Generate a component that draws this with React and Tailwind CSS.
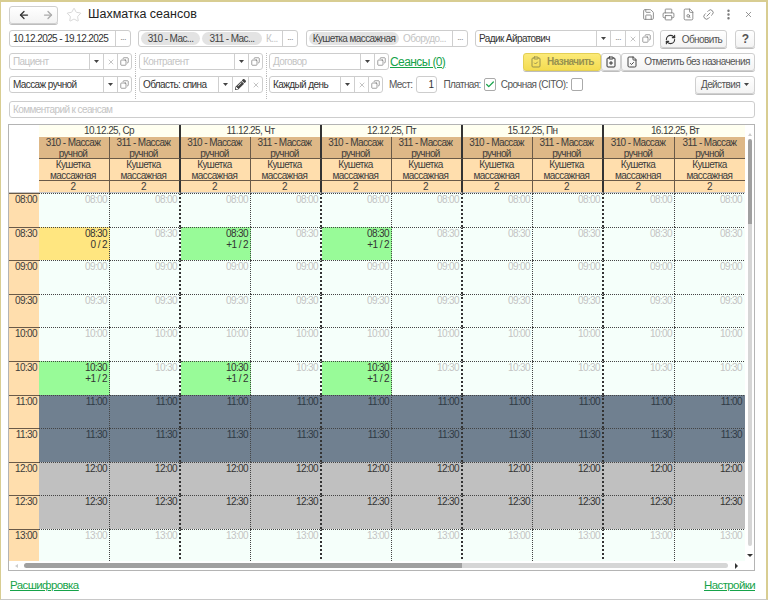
import {
  ArrowLeft, ArrowRight, Star, Save, Printer, FileSearch, Link2, EllipsisVertical, X, RefreshCw,
  ClipboardCheck, ClipboardPlus, FileCheck, Copy, Check,
} from 'lucide-react';
import { FaPencilAlt } from 'react-icons/fa';

const days = ['10.12.25, Ср', '11.12.25, Чт', '12.12.25, Пт', '15.12.25, Пн', '16.12.25, Вт'];
const times = ['08:00', '08:30', '09:00', '09:30', '10:00', '10:30', '11:00', '11:30', '12:00', '12:30', '13:00'];
const rooms = [0, 1, 2, 3, 4, 5, 6, 7, 8, 9];

const booked = {
  '08:30': { 0: ['bg-[#ffe680]', '0 / 2'], 2: ['bg-[#98fb98]', '+1 / 2'], 4: ['bg-[#98fb98]', '+1 / 2'] },
  '10:30': { 0: ['bg-[#98fb98]', '+1 / 2'], 2: ['bg-[#98fb98]', '+1 / 2'], 4: ['bg-[#98fb98]', '+1 / 2'] },
};

const rowTone = (time) => {
  if (time === '11:00' || time === '11:30') return 'bg-[#708090] text-[#2f3a45]';
  if (time === '12:00' || time === '12:30') return 'bg-[#c0c0c0] text-[#333]';
  return 'bg-[#f5fffa] text-[#c4c4c4]';
};

const Arrow = () => (
  <svg width="5" height="3" viewBox="0 0 5 3"><path d="M0 0h5L2.5 3z" fill="#444" /></svg>
);

const Part = ({ children, className = 'w-[14px]' }) => (
  <div className={`flex shrink-0 items-center justify-center border-l border-[#cfcfcf] text-[#888] ${className}`}>{children}</div>
);

const Dots = () => <Part className="w-[15px] pb-[1px] text-[9px]">...</Part>;
const Cross = () => <Part><X size={8} strokeWidth={1.5} /></Part>;
const Open = () => <Part><Copy size={9} strokeWidth={1.5} className="text-[#555] -scale-x-100" /></Part>;
const Drop = () => <Part><Arrow /></Part>;

const Field = ({ width, text, placeholder, children }) => (
  <div className={`flex h-[17px] shrink-0 rounded-[3px] border border-[#cdcdcd] bg-white ${width}`}>
    <div className={`min-w-0 flex-1 truncate pl-[3px] leading-[15px] ${placeholder ? 'text-[#c4c4c4]' : 'text-[#333]'}`}>
      {placeholder || text}
    </div>
    {children}
  </div>
);

const Chip = ({ children, className }) => (
  <span className={`mt-[1px] flex h-[13px] shrink-0 items-center justify-center rounded-full bg-[#e3e3e3] whitespace-nowrap text-[#444] ${className}`}>{children}</span>
);

const Button = ({ children, className = '' }) => (
  <button className={`flex h-[18px] shrink-0 items-center justify-center whitespace-nowrap rounded-[3px] border border-[#cfcfcf] bg-gradient-to-b from-white to-[#f3f3f3] text-[#555] shadow-[0_1px_0_#bdbdbd] ${className}`}>
    {children}
  </button>
);

const Sep = () => <div className="h-[23px] w-0 shrink-0 self-start border-l border-dotted border-[#bbb]" />;

const Box = ({ children }) => (
  <div className="flex h-[13px] w-[12px] shrink-0 items-center justify-center rounded-[2px] border border-[#aaa] bg-white">{children}</div>
);

const cellEdge = (i) => (i % 2 === 0 ? 'border-r border-dotted border-r-[#444] pr-[2px]' : i === 9 ? 'pr-[4px]' : 'border-r-2 border-r-[#333] pr-[2px]');
const headEdge = (i) => (i % 2 === 0 ? 'border-r border-r-[#6a5a48]' : i === 9 ? '' : 'border-r-2 border-r-[#333]');

const Table = () => (
  <div className="mt-[6px] -ml-px flex h-[447px] flex-col border border-[#b4b4b4] bg-white">
    <div className="flex h-[436px]">
      <div className="w-[736px] overflow-hidden">
        <div className="grid grid-cols-[30px_71px_71px_70px_71px_70px_71px_70px_71px_71px_71px] leading-[11px] text-[#3c3c3c]">
          <div className="row-span-4 border-b border-[#c4c4c4] bg-white" />
          {days.map((d, i) => (
            <div key={d} className={`col-span-2 h-[12px] bg-[#fffff0] text-center ${i < 4 ? 'border-r-2 border-r-[#333]' : ''}`}>{d}</div>
          ))}
          {rooms.map((i) => (
            <div key={i} className={`h-[22px] border-b border-[#6a5a48] bg-[#deb887] pr-[2px] text-center ${headEdge(i)}`}>
              {i % 2 === 0 ? '310' : '311'} - Массаж<br />ручной
            </div>
          ))}
          {rooms.map((i) => (
            <div key={i} className={`h-[22px] border-b border-[#6a5a48] bg-[#ffdead] pr-[2px] text-center ${headEdge(i)}`}>Кушетка<br />массажная</div>
          ))}
          {rooms.map((i) => (
            <div key={i} className={`h-[12px] border-b border-[#c4c4c4] bg-[#ffdead] pr-[2px] text-center ${headEdge(i)}`}>2</div>
          ))}
          {times.map((t) => [
            <div key={t} className="h-[33.6px] border-t border-[#6a5a48] bg-[#ffdead] pr-[2px] text-right">{t}</div>,
            ...rooms.map((i) => {
              const mark = booked[t]?.[i];
              return (
                <div
                  key={t + i}
                  className={`h-[33.6px] border-t border-dotted border-t-[#444] text-right ${cellEdge(i)} ${mark ? `${mark[0]} text-[#333]` : rowTone(t)}`}
                >
                  {t}
                  {mark && <div>{mark[1]}</div>}
                </div>
              );
            }),
          ])}
        </div>
      </div>
      <div className="flex w-[9px] flex-col items-center pt-[8px] pb-[4px]">
        <div className="h-0 w-0 border-x-[2px] border-b-[3px] border-x-transparent border-b-[#ccc]" />
        <div className="mt-[3px] h-[85px] w-[4px] rounded-t-[2px] bg-[#a0a0a0]" />
        <div className="h-[322px] w-[4px] rounded-b-[2px] bg-[#d6d6d6]" />
        <div className="mt-auto h-0 w-0 border-x-[3px] border-t-[3px] border-x-transparent border-t-[#333]" />
      </div>
    </div>
    <div className="flex h-[10px] items-center pl-[6px] pr-[16px]">
      <div className="h-0 w-0 border-y-[2px] border-r-[3px] border-y-transparent border-r-[#ccc]" />
      <div className="ml-[6px] h-[5px] w-[438px] rounded-l-[3px] bg-[#a0a0a0]" />
      <div className="h-[5px] w-[266px] rounded-r-[3px] bg-[#d6d6d6]" />
      <div className="ml-auto h-0 w-0 border-y-[3px] border-l-[3px] border-y-transparent border-l-[#333]" />
    </div>
  </div>
);

export default function App() {
  return (
    <div className="flex h-[600px] w-[768px] flex-col border border-t-2 border-r-2 border-[#d8cd92] border-b-[#c8c8c8] bg-white pt-[4px] pr-[11px] pl-[8px] font-['Liberation_Sans',sans-serif] text-[10px] tracking-[-0.6px]">
      <div className="flex h-[17px] items-center">
        <div className="flex h-[18px] w-[49px] rounded-[3px] border border-[#cfcfcf] bg-gradient-to-b from-white to-[#f3f3f3] shadow-[0_1px_0_#bdbdbd]">
          <div className="flex w-[28px] items-center justify-center"><ArrowLeft size={12} strokeWidth={2.5} className="text-[#333]" /></div>
          <div className="flex flex-1 items-center justify-center"><ArrowRight size={12} strokeWidth={2.5} className="text-[#aaa]" /></div>
        </div>
        <Star size={16} strokeWidth={1} className="ml-[8px] text-[#c4c4c4]" />
        <div className="ml-[6px] text-[12.5px] tracking-normal text-[#222]">Шахматка сеансов</div>
        <div className="ml-auto flex items-center gap-[7px] text-[#777]">
          <Save size={13} strokeWidth={1.5} />
          <Printer size={13} strokeWidth={1.5} />
          <FileSearch size={13} strokeWidth={1.5} />
          <Link2 size={13} strokeWidth={1.5} className="-rotate-45" />
          <EllipsisVertical size={13} strokeWidth={2.5} />
          <X size={9} className="mr-[2px] ml-[2px]" />
        </div>
      </div>

      <div className="mt-[7px] flex h-[17px] items-start">
        <Field width="w-[122px]" text="10.12.2025 - 19.12.2025"><Dots /></Field>
        <div className="ml-[7px] flex h-[17px] w-[160px] shrink-0 rounded-[3px] border border-[#cdcdcd] bg-white pl-[2px]">
          <Chip className="w-[59px]">310 - Мас...</Chip>
          <Chip className="ml-[2px] w-[60px]">311 - Мас...</Chip>
          <span className="ml-[4px] flex-1 leading-[15px] text-[#c4c4c4]">К...</span>
          <Dots />
        </div>
        <div className="ml-[8px] flex h-[17px] w-[162px] shrink-0 rounded-[3px] border border-[#cdcdcd] bg-white pl-[2px]">
          <Chip className="w-[90px]">Кушетка массажная</Chip>
          <span className="ml-[4px] flex-1 leading-[15px] text-[#c4c4c4]">Оборудо...</span>
          <Dots />
        </div>
        <div className="ml-[7px] w-[179px] shrink-0">
          <Field width="w-full" text="Радик Айратович"><Drop /><Dots /><Cross /><Open /></Field>
        </div>
        <Button className="ml-[6px] w-[67px] gap-[6px]"><RefreshCw size={11} strokeWidth={2.5} className="text-[#333]" />Обновить</Button>
        <Button className="ml-[8px] w-[20px] text-[12px] font-bold text-[#333]">?</Button>
      </div>

      <div className="mt-[6px] flex h-[17px] items-center">
        <Field width="w-[123px]" placeholder="Пациент"><Drop /><Cross /><Open /></Field>
        <div className="mx-[3px] flex h-[17px] w-px"><Sep /></div>
        <Field width="w-[124px]" placeholder="Контрагент"><Drop /><Open /></Field>
        <div className="mr-[2px] ml-[3px] flex h-[17px] w-px"><Sep /></div>
        <Field width="w-[120px]" placeholder="Договор"><Drop /><Open /></Field>
        <a className="ml-[1px] text-[12px] text-[#16a34a] underline">Сеансы (0)</a>
        <button className="ml-auto flex h-[18px] w-[78px] items-center justify-center gap-[5px] rounded-[3px] border border-[#e3cf54] bg-gradient-to-b from-[#fcea78] to-[#f4dc50] font-bold text-[#97914f] shadow-[0_1px_0_#bdbdbd]">
          <ClipboardCheck size={12} />Назначить
        </button>
        <Button className="w-[20px]"><ClipboardPlus size={12} className="text-[#333]" /></Button>
        <Button className="w-[134px] gap-[6px]"><FileCheck size={12} className="text-[#444]" />Отметить без назначения</Button>
      </div>

      <div className="mt-[6px] flex h-[17px] items-center">
        <Field width="w-[123px]" text="Массаж ручной"><Drop /><Open /></Field>
        <div className="mx-[3px] flex h-[17px] w-px"><Sep /></div>
        <Field width="w-[124px]" text="Область: спина">
          <Drop />
          <Part className="w-[16px]"><FaPencilAlt size={11} className="text-[#444]" /></Part>
          <Cross />
        </Field>
        <div className="mr-[2px] ml-[3px] flex h-[17px] w-px"><Sep /></div>
        <Field width="w-[114px]" text="Каждый день"><Drop /><Cross /><Open /></Field>
        <span className="ml-[6px] text-[#555]">Мест:</span>
        <div className="ml-[4px] h-[17px] w-[21px] rounded-[3px] border border-[#cdcdcd] pr-[3px] text-right leading-[15px] text-[#333]">1</div>
        <span className="ml-[6px] text-[#555]">Платная:</span>
        <div className="ml-[3px]"><Box><Check size={13} strokeWidth={3} className="text-[#16a34a]" /></Box></div>
        <span className="ml-[5px] text-[#555]">Срочная (CITO):</span>
        <div className="ml-[3px]"><Box /></div>
        <Button className="ml-auto w-[60px] gap-[4px]">Действия<Arrow /></Button>
      </div>

      <div className="mt-[8px] h-[17px] rounded-[3px] border border-[#cdcdcd] pl-[3px] leading-[15px] text-[#c4c4c4]">Комментарий к сеансам</div>

      <Table />

      <div className="mt-[6px] flex justify-between pl-[1px] text-[11.5px] text-[#16a34a] underline">
        <a>Расшифровка</a>
        <a>Настройки</a>
      </div>
    </div>
  );
}
